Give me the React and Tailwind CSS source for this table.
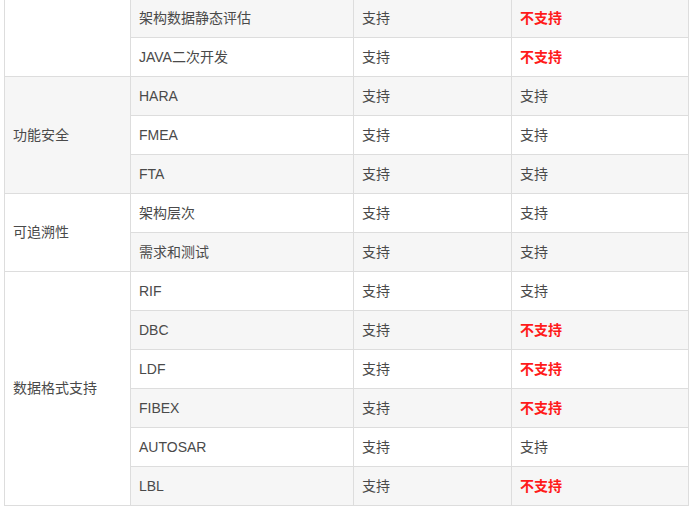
import React from "react";

const groups = [
  {
    name: "",
    rows: [
      ["架构数据静态评估", "支持", "不支持"],
      ["JAVA二次开发", "支持", "不支持"],
    ],
  },
  {
    name: "功能安全",
    rows: [
      ["HARA", "支持", "支持"],
      ["FMEA", "支持", "支持"],
      ["FTA", "支持", "支持"],
    ],
  },
  {
    name: "可追溯性",
    rows: [
      ["架构层次", "支持", "支持"],
      ["需求和测试", "支持", "支持"],
    ],
  },
  {
    name: "数据格式支持",
    rows: [
      ["RIF", "支持", "支持"],
      ["DBC", "支持", "不支持"],
      ["LDF", "支持", "不支持"],
      ["FIBEX", "支持", "不支持"],
      ["AUTOSAR", "支持", "支持"],
      ["LBL", "支持", "不支持"],
    ],
  },
];

const cell = "border border-[#dddddd] px-[8px] py-0 h-[39px] align-middle text-left font-normal";

const Value = ({ v }) =>
  v === "不支持" ? (
    <span className="text-[#ff1a1a] font-bold">{v}</span>
  ) : (
    <span>{v}</span>
  );

export default function App() {
  let idx = 0;
  return (
    <div
      className="bg-white w-[694px] h-[510px] overflow-hidden pl-[4px]"
      style={{ fontFamily: '"Liberation Sans", "Noto Sans CJK SC", sans-serif' }}
    >
      <table className="border-collapse w-[685px] -mt-[2px] table-fixed text-[14px] text-[#4a4a4a]">
        <colgroup>
          <col className="w-[126px]" />
          <col className="w-[223px]" />
          <col className="w-[158px]" />
          <col />
        </colgroup>
        <tbody>
          {groups.map((g) =>
            g.rows.map((r, i) => {
              const odd = idx++ % 2 === 0;
              const bg = odd ? "bg-[#f6f6f6]" : "bg-white";
              return (
                <tr key={r[0]} className={bg}>
                  {i === 0 && (
                    <td
                      rowSpan={g.rows.length}
                      className={`${cell} ${g.name ? "" : "bg-white"}`}
                    >
                      {g.name}
                    </td>
                  )}
                  <td className={cell}>{r[0]}</td>
                  <td className={cell}>
                    <Value v={r[1]} />
                  </td>
                  <td className={cell}>
                    <Value v={r[2]} />
                  </td>
                </tr>
              );
            })
          )}
        </tbody>
      </table>
    </div>
  );
}
